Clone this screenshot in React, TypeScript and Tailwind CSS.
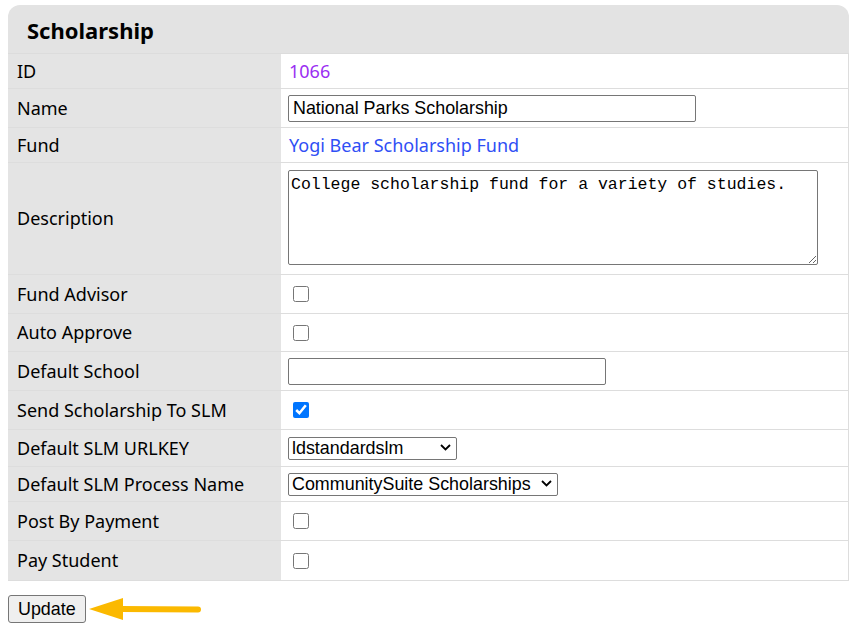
import React from "react";

const label = "font-['Noto_Sans',sans-serif] text-[18px] text-black";
const field = "font-['Liberation_Sans',Arial,sans-serif] text-[17.9px] text-black";

type Row = {
    name: string;
    h: string;
    top?: boolean;
    value: React.ReactNode;
};

const Check = ({checked = false}: {checked?: boolean}) => (
    <input
        type="checkbox"
        defaultChecked={checked}
        className="w-4 h-4 ml-[5px] accent-[#0075ff]"
    />
);

const Select = ({value, w}: {value: string; w: string}) => (
    <div className={`relative ${w}`}>
        <select
            defaultValue={value}
            className={`${field} appearance-none w-full h-[23px] border border-[#767676] rounded-[2px] bg-white pl-[3px] pr-6 leading-[21px]`}
        >
            <option>{value}</option>
        </select>
        <svg className="pointer-events-none absolute right-[6px] top-[8px]" width="11" height="7" viewBox="0 0 11 7">
            <path d="M1 1l4.5 4.5L10 1" fill="none" stroke="#000" strokeWidth="1.8"/>
        </svg>
    </div>
);

const rows: Row[] = [
    {name: "ID", h: "h-[35px]", value: <span className="font-['Noto_Sans',sans-serif] text-[18px] text-[#9a2ef2] ml-px">1066</span>},
    {
        name: "Name",
        h: "h-[39px]",
        value: (
            <input
                defaultValue="National Parks Scholarship"
                className={`${field} w-[408px] h-[27px] border border-[#767676] rounded-[2px] px-1`}
            />
        ),
    },
    {name: "Fund", h: "h-[35px]", value: <a className="font-['Noto_Sans',sans-serif] text-[18px] text-[#2f4ff5] ml-px">Yogi Bear Scholarship Fund</a>},
    {
        name: "Description",
        h: "h-[112px]",
        top: true,
        value: (
            <textarea
                defaultValue="College scholarship fund for a variety of studies."
                className="font-['Liberation_Mono',monospace] text-[16.5px] leading-[20px] text-black w-[530px] h-[95px] border border-[#767676] rounded-[2px] px-[2px] pt-[4px] resize"
            />
        ),
    },
    {name: "Fund Advisor", h: "h-[39px]", value: <Check/>},
    {name: "Auto Approve", h: "h-[38px]", value: <Check/>},
    {
        name: "Default School",
        h: "h-[39px]",
        value: <input className={`${field} w-[318px] h-[27px] border border-[#767676] rounded-[2px] px-1`}/>,
    },
    {name: "Send Scholarship To SLM", h: "h-[39px]", value: <Check checked/>},
    {name: "Default SLM URLKEY", h: "h-[37px]", value: <Select value="ldstandardslm" w="w-[169px]"/>},
    {name: "Default SLM Process Name", h: "h-[35px]", value: <Select value="CommunitySuite Scholarships" w="w-[270px]"/>},
    {name: "Post By Payment", h: "h-[39px]", value: <Check/>},
    {name: "Pay Student", h: "h-[40px]", value: <Check/>},
];

export default function App() {
    return (
        <div className="min-h-[637px] bg-white pt-[5px] pl-2 w-[858px]">
            <div className="w-[841px]">
                <div className="h-[49px] bg-[#e3e3e3] rounded-t-[12px] flex items-center pl-[19px] pt-[3px] border-b border-[#dcdcdc]">
                    <h1 className="font-['Noto_Sans',sans-serif] text-[22px] font-bold text-black">Scholarship</h1>
                </div>
                <div className="border-r border-[#dddddd]">
                    {rows.map((r) => (
                        <div key={r.name} className={`grid grid-cols-[273px_1fr] border-b border-[#dddddd] ${r.h}`}>
                            <div className={`bg-[#e4e4e4] flex items-center pl-[9px] ${label}`}>{r.name}</div>
                            <div className={`bg-white flex pl-[7px] ${r.top ? "items-start pt-[7px]" : "items-center"}`}>
                                {r.value}
                            </div>
                        </div>
                    ))}
                </div>
            </div>
            <div className="flex items-center mt-[14px]">
                <button className={`${field} h-[28px] px-[9px] bg-[#efefef] border border-[#767676] rounded-[3px]`}>
                    Update
                </button>
                <svg width="116" height="26" viewBox="0 0 116 26" className="ml-[1px]">
                    <path d="M2 13L36 2L36 24Z" fill="#fbb900"/>
                    <path d="M34 13L111 13.5" stroke="#fbb900" strokeWidth="6" strokeLinecap="round"/>
                </svg>
            </div>
        </div>
    );
}
